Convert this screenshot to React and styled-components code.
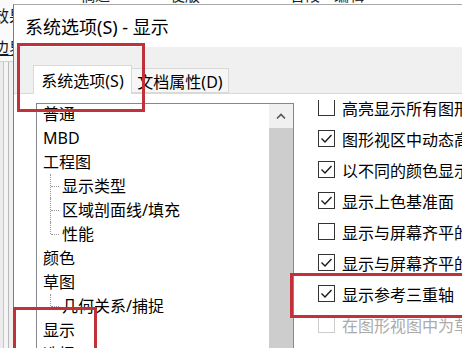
import React from 'react'
import styled, { createGlobalStyle } from 'styled-components'

const GlobalStyle = createGlobalStyle`
  html, body {
    margin: 0;
    padding: 0;
    background: #fff;
  }
  body {
    width: 462px;
    height: 348px;
    overflow: hidden;
    font-family: "Noto Sans", "Noto Sans CJK SC", sans-serif;
    color: #000;
  }
`;

//Styled
const Screen = styled.div`
  position: relative;
  width: 462px;
  height: 348px;
  display: flex;
  overflow: hidden;
  background: #fff;
`;

// the app window behind the dialog
const BackStrip = styled.div`
  width: 13px;
  flex-shrink: 0;
  display: flex;
  flex-direction: column;
  overflow: hidden;
`;

const BackTop = styled.div`
  height: 61px;
  background: #fafafa;
  display: flex;
  flex-direction: column;
  border-bottom: 1px solid #d0d0d0;
`;

const BackChar = styled.span`
  margin-left: -7px;
  margin-top: ${props => props.top}px;
  font-size: 16px;
  line-height: 18px;
  color: #1a1a1a;
  white-space: nowrap;
  text-decoration: ${props => props.underline ? 'underline' : 'none'};
`;

const BackBody = styled.div`
  flex: 1;
  background: linear-gradient(
    to right,
    #ececec 0 3px,
    #c6c6c6 3px 4px,
    #f4f4f4 4px 8px,
    #b9b9b9 8px 9px,
    #f0f0f0 9px
  );
`;

const DialogColumn = styled.div`
  flex: 1;
  display: flex;
  flex-direction: column;
  min-width: 0;
`;

const TopPeek = styled.div`
  flex: 0 0 4px;
  height: 4px;
  display: flex;
  align-items: flex-start;
  overflow: hidden;
  background: #fff;
`;

const PeekText = styled.span`
  display: block;
  height: 16px;
  margin-top: -13px;
  margin-left: ${props => props.gap}px;
  font-size: 15px;
  line-height: 16px;
  color: #222;
  white-space: nowrap;
`;

const Dialog = styled.div`
  flex: 1;
  display: flex;
  flex-direction: column;
  background: #fff;
  border-left: 1px solid #7c7c7c;
  border-top: 1px solid #a8a8a8;
  min-height: 0;
`;

const TitleBar = styled.div`
  height: 42px;
  padding-left: 11px;
  display: flex;
  align-items: center;
  font-size: 18px;
  white-space: nowrap;
`;

const TabStrip = styled.div`
  height: 46px;
  display: flex;
  align-items: flex-end;
  padding-left: 19px;
  background: #f0f0f0;
  border-bottom: 1px solid #d9d9d9;
`;

const Tab = styled.div`
  box-sizing: border-box;
  width: ${props => props.active ? 99 : 97}px;
  height: ${props => props.active ? 29 : 25}px;
  margin-bottom: ${props => props.active ? -1 : 0}px;
  display: flex;
  align-items: center;
  justify-content: center;
  font-size: 16px;
  white-space: nowrap;
  background: ${props => props.active ? '#fff' : '#f6f6f6'};
  border: 1px solid #d9d9d9;
  border-bottom: ${props => props.active ? 'none' : '1px solid #d9d9d9'};
  border-left: ${props => props.active ? '1px solid #d9d9d9' : 'none'};
`;

const Body = styled.div`
  flex: 1;
  display: flex;
  padding-top: 6px;
  min-height: 0;
`;

const TreePanel = styled.div`
  box-sizing: border-box;
  width: 258px;
  flex-shrink: 0;
  margin-left: 22px;
  margin-top: 3px;
  display: flex;
  border: 1px solid #828790;
  border-bottom: none;
  overflow: hidden;
`;

const TreeList = styled.div`
  flex: 1;
  margin-top: -2px;
`;

const TreeRow = styled.div`
  position: relative;
  height: 24px;
  line-height: 24px;
  font-size: 16px;
  white-space: nowrap;
  padding-left: ${props => props.child ? 25 : 6}px;

  ${({ child, last }) => child && `
    &::before {
      content: '';
      position: absolute;
      left: 13px;
      top: 0;
      height: ${last ? '12px' : '24px'};
      border-left: 1px dotted #9a9a9a;
    }
    &::after {
      content: '';
      position: absolute;
      left: 14px;
      top: 12px;
      width: 8px;
      border-top: 1px dotted #9a9a9a;
    }
  `}
`;

const Scrollbar = styled.div`
  width: 24px;
  display: flex;
  flex-direction: column;
  background: #f0f0f0;
`;

const ScrollButton = styled.div`
  height: 24px;
  display: flex;
  align-items: center;
  justify-content: center;
`;

const Thumb = styled.div`
  flex: 1;
  background: #cdcdcd;
`;

const OptionsPanel = styled.div`
  flex: 1;
  overflow: hidden;
  padding-left: 24px;
`;

const OptionList = styled.div`
  margin-top: -8px;
`;

const OptionRow = styled.div`
  height: 31px;
  display: flex;
  align-items: center;
  gap: 7px;
  font-size: 16px;
  white-space: nowrap;
  color: ${props => props.disabled ? '#ababab' : '#000'};
`;

const Box = styled.span`
  box-sizing: border-box;
  width: 17px;
  height: 17px;
  flex-shrink: 0;
  display: flex;
  align-items: center;
  justify-content: center;
  background: #fff;
  border: 1px solid ${props => props.disabled ? '#cccccc' : '#333'};
`;

// annotation frames drawn over the screenshot
const Marker = styled.div`
  position: absolute;
  left: ${props => props.x}px;
  top: ${props => props.y}px;
  width: ${props => props.w}px;
  height: ${props => props.h}px;
  box-sizing: border-box;
  border: 3px solid #c2303a;
  pointer-events: none;
`;

const tree = [
  { label: '普通' },
  { label: 'MBD' },
  { label: '工程图', children: ['显示类型', '区域剖面线/填充', '性能'] },
  { label: '颜色' },
  { label: '草图', children: ['几何关系/捕捉'] },
  { label: '显示' },
  { label: '选择' },
];

const options = [
  { label: '高亮显示所有图形区域中选中特征的边线', checked: false },
  { label: '图形视区中动态高亮显示', checked: true },
  { label: '以不同的颜色显示曲面的开环边线', checked: true },
  { label: '显示上色基准面', checked: true },
  { label: '显示与屏幕齐平的尺寸', checked: false },
  { label: '显示与屏幕齐平的注解', checked: true },
  { label: '显示参考三重轴', checked: true },
  { label: '在图形视图中为草图显示滚动条', checked: false, disabled: true },
];

const Chevron = () => (
  <svg width="10" height="7" viewBox="0 0 10 7">
    <polyline points="1,5.5 5,1.5 9,5.5" fill="none" stroke="#555" strokeWidth="1.6" />
  </svg>
);

const Check = () => (
  <svg width="15" height="15" viewBox="0 0 15 15">
    <polyline points="2.5,7.5 6,11 12.5,4" fill="none" stroke="#1a1a1a" strokeWidth="1.4" />
  </svg>
);

const App = () => {
  return (
    <Screen>
      <GlobalStyle />
      <BackStrip>
        <BackTop>
          <BackChar top={7}>效果</BackChar>
          <BackChar top={14} underline>边界</BackChar>
        </BackTop>
        <BackBody />
      </BackStrip>

      <DialogColumn>
        <TopPeek>
          <PeekText gap={67}>稿近</PeekText>
          <PeekText gap={60}>梗版</PeekText>
          <PeekText gap={90}>曾段</PeekText>
          <PeekText gap={14}>编辑</PeekText>
        </TopPeek>
        <Dialog>
          <TitleBar>系统选项(S) - 显示</TitleBar>
          <TabStrip>
            <Tab active>系统选项(S)</Tab>
            <Tab>文档属性(D)</Tab>
          </TabStrip>
          <Body>
            <TreePanel>
              <TreeList>
                {tree.map(item => (
                  <React.Fragment key={item.label}>
                    <TreeRow>{item.label}</TreeRow>
                    {item.children && item.children.map((c, i) => (
                      <TreeRow key={c} child last={i === item.children.length - 1}>{c}</TreeRow>
                    ))}
                  </React.Fragment>
                ))}
              </TreeList>
              <Scrollbar>
                <ScrollButton><Chevron /></ScrollButton>
                <Thumb />
              </Scrollbar>
            </TreePanel>
            <OptionsPanel>
              <OptionList>
                {options.map((o, i) => (
                  <OptionRow key={i} disabled={o.disabled}>
                    <Box disabled={o.disabled}>{o.checked && <Check />}</Box>
                    {o.label}
                  </OptionRow>
                ))}
              </OptionList>
            </OptionsPanel>
          </Body>
        </Dialog>
      </DialogColumn>

      <Marker x={17} y={43} w={128} h={69} />
      <Marker x={13} y={307} w={84} h={60} />
      <Marker x={290} y={273} w={180} h={45} />
    </Screen>
  )
}

export default App;
